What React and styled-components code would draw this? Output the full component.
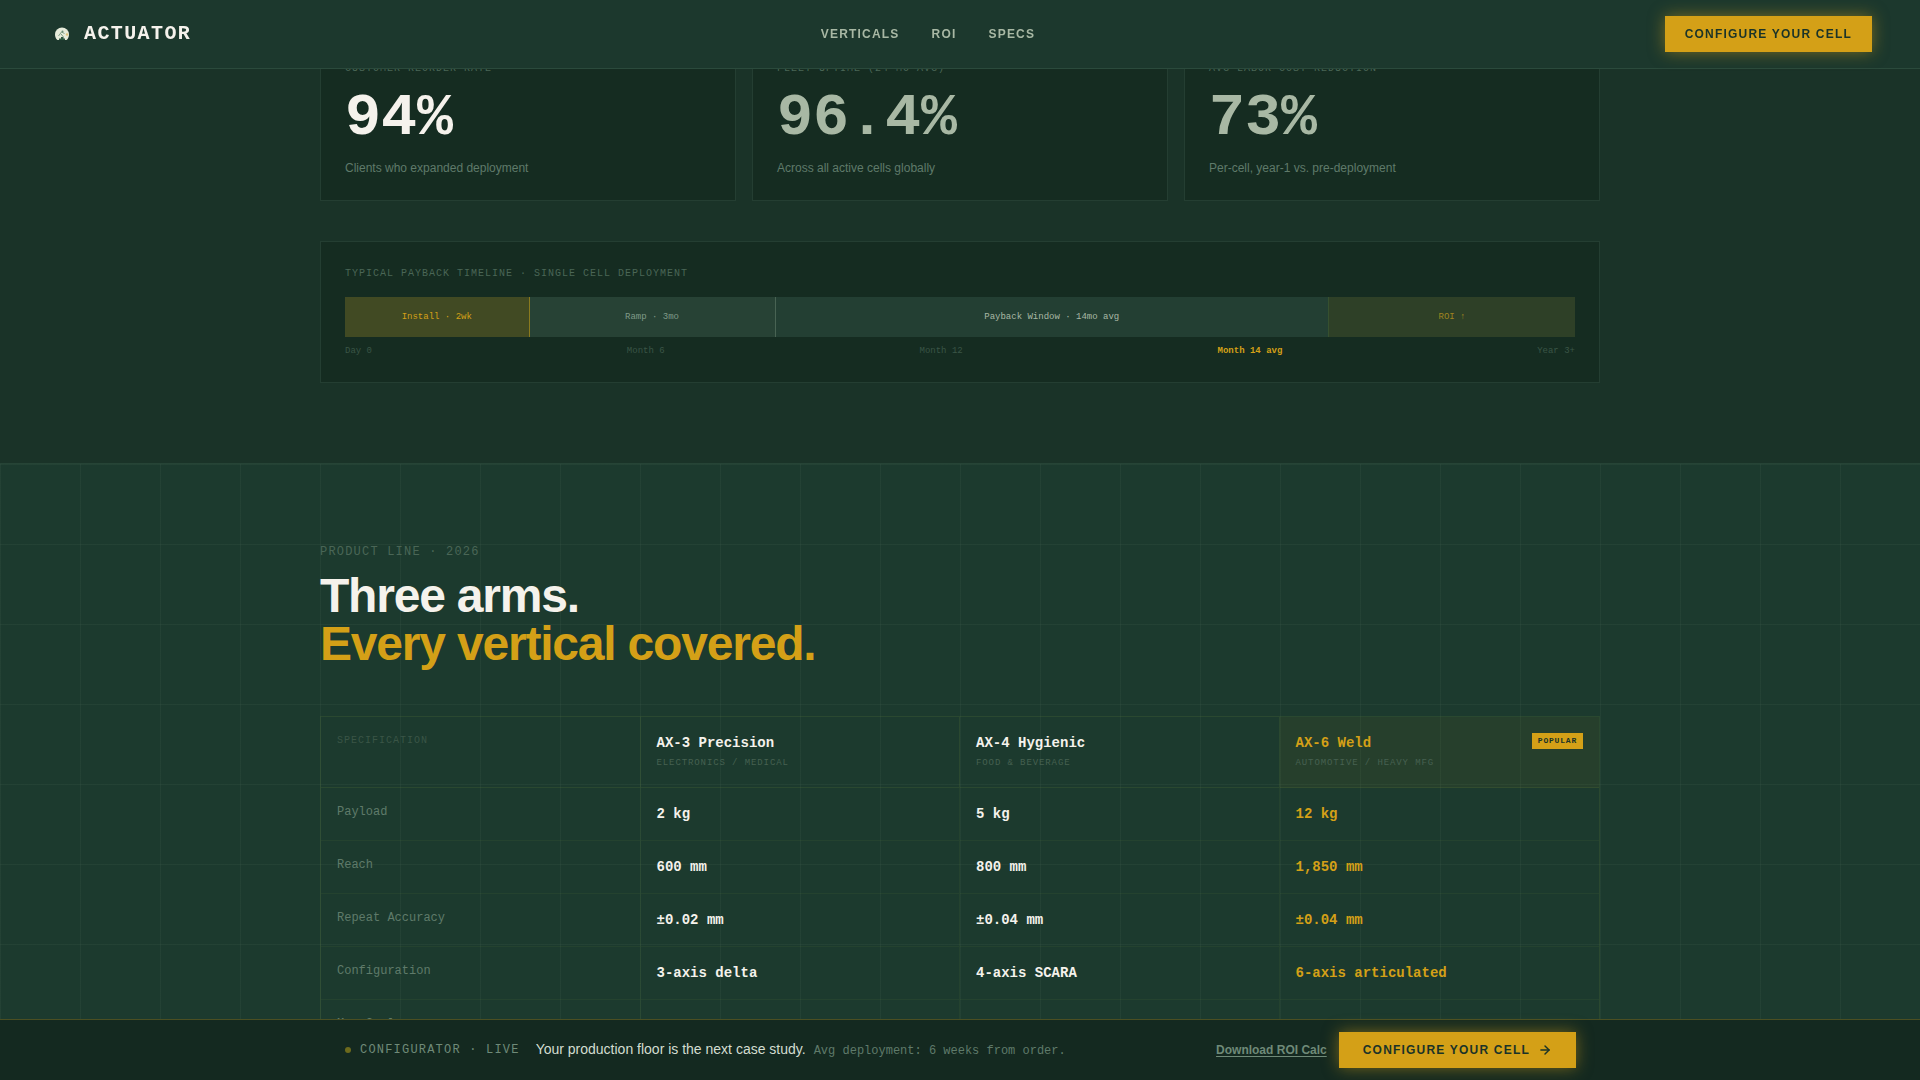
import { ArrowRight } from 'lucide-react';
import React from 'react';
import styled, { createGlobalStyle, css } from 'styled-components';

const mono = `'Liberation Mono', monospace`;
const sans = `'Liberation Sans', sans-serif`;

const stats = [
  { label: 'Customer Reorder Rate', value: '94%', note: 'Clients who expanded deployment', bright: true },
  { label: 'Fleet Uptime (24 mo avg)', value: '96.4%', note: 'Across all active cells globally' },
  { label: 'Avg Labor Cost Reduction', value: '73%', note: 'Per-cell, year-1 vs. pre-deployment' }
];

const phases = [
  { name: 'Install · 2wk', share: 15, tone: 'install' },
  { name: 'Ramp · 3mo', share: 20, tone: 'ramp' },
  { name: 'Payback Window · 14mo avg', share: 45, tone: 'payback' },
  { name: 'ROI ↑', share: 20, tone: 'roi' }
];

const ticks = ['Day 0', 'Month 6', 'Month 12', 'Month 14 avg', 'Year 3+'];

const models = [
  { name: 'AX-3 Precision', field: 'Electronics / Medical' },
  { name: 'AX-4 Hygienic', field: 'Food & Beverage' },
  { name: 'AX-6 Weld', field: 'Automotive / Heavy Mfg', popular: true }
];

const specs = [
  ['Payload', '2 kg', '5 kg', '12 kg'],
  ['Reach', '600 mm', '800 mm', '1,850 mm'],
  ['Repeat Accuracy', '±0.02 mm', '±0.04 mm', '±0.04 mm'],
  ['Configuration', '3-axis delta', '4-axis SCARA', '6-axis articulated'],
  ['Max Cycle', '180 ppm', '120 ppm', '45 ppm']
];

function App() {
  return (
    <>
      <GlobalStyle />
      <NavBar>
        <Brand href="#top">
          <LogoMark />
          ACTUATOR
        </Brand>
        <NavLinks>
          <a href="#verticals">Verticals</a>
          <a href="#roi">ROI</a>
          <a href="#specs">Specs</a>
        </NavLinks>
        <CtaButton type="button">Configure your cell</CtaButton>
      </NavBar>
      <main>
        <RoiSection id="roi">
          <Container>
            <StatGrid>
              {stats.map((stat) => (
                <StatCard key={stat.label}>
                  <SmallLabel>{stat.label}</SmallLabel>
                  <StatValue $bright={stat.bright}>{stat.value}</StatValue>
                  <StatNote>{stat.note}</StatNote>
                </StatCard>
              ))}
            </StatGrid>
            <TimelineCard>
              <SmallLabel>Typical Payback Timeline · Single Cell Deployment</SmallLabel>
              <TimelineBar>
                {phases.map((phase) => (
                  <Phase key={phase.name} $tone={phase.tone} style={{ width: `${phase.share}%` }}>
                    {phase.name}
                  </Phase>
                ))}
              </TimelineBar>
              <TickRow>
                {ticks.map((tick) => (
                  <Tick key={tick} $active={tick === 'Month 14 avg'}>
                    {tick}
                  </Tick>
                ))}
              </TickRow>
            </TimelineCard>
          </Container>
        </RoiSection>
        <SpecSection id="specs">
          <Container>
            <Eyebrow>Product Line · 2026</Eyebrow>
            <Heading>
              Three arms.
              <span>Every vertical covered.</span>
            </Heading>
            <SpecTable>
              <thead>
                <tr>
                  <SpecHead scope="col">Specification</SpecHead>
                  {models.map((model) => (
                    <ModelHead key={model.name} scope="col" $popular={model.popular}>
                      <ModelTop>
                        <div>
                          <ModelName>{model.name}</ModelName>
                          <ModelField>{model.field}</ModelField>
                        </div>
                        {model.popular && <Badge>Popular</Badge>}
                      </ModelTop>
                    </ModelHead>
                  ))}
                </tr>
              </thead>
              <tbody>
                {specs.map(([label, ...values]) => (
                  <tr key={label}>
                    <RowHead scope="row">{label}</RowHead>
                    {values.map((value, i) => (
                      <SpecCell key={models[i].name} $popular={models[i].popular}>
                        {value}
                      </SpecCell>
                    ))}
                  </tr>
                ))}
              </tbody>
            </SpecTable>
          </Container>
        </SpecSection>
      </main>
      <BottomBar>
        <BottomInner>
          <Status>
            <StatusDot />
            Configurator · Live
          </Status>
          <Pitch>
            Your production floor is the next case study.
            <span>Avg deployment: 6 weeks from order.</span>
          </Pitch>
          <Download href="#roi-calc">Download ROI Calc</Download>
          <CtaButton type="button" $wide>
            Configure your cell
            <ArrowRight size={14} strokeWidth={2.5} aria-hidden="true" />
          </CtaButton>
        </BottomInner>
      </BottomBar>
    </>
  );
}

function LogoMark() {
  return (
    <svg width="28" height="28" viewBox="0 0 28 28" aria-hidden="true">
      <path d="M9.4 20C7.800 18.600 7 16.600 7 14.400A7 7 0 0 1 21 14.400C21 16.600 20.200 18.600 18.600 20Z" fill="#e6ebda" />
      <path d="M10.500 16l3-4 3 1.500M13 14l2.500 3" fill="none" stroke="#7f9f86" strokeWidth="1" />
      <circle cx="14.500" cy="11.500" r="1" fill="#6d8f78" />
      <path d="M11 20v-1.500h2V17h2.500v1.500H17V20z" fill="#2c5740" />
      <circle cx="19" cy="14.500" r="1.200" fill="#dcc07a" />
    </svg>
  );
}

export default App;

// style
const GlobalStyle = createGlobalStyle`
  * {
    box-sizing: border-box;
  }
  body {
    margin: 0;
    background-color: #1a3328;
    color: #f5f2ec;
    font-family: ${sans};
  }
  h2,
  p {
    margin: 0;
  }
`;

const Container = styled.div`
  max-width: 1280px;
  margin: 0 auto;
`;

const NavBar = styled.header`
  position: fixed;
  top: 0;
  left: 0;
  right: 0;
  z-index: 10;
  display: flex;
  justify-content: space-between;
  align-items: center;
  padding: 16px 48px;
  border-bottom: 1px solid #2b4a3c;
  background-color: #1c382d;
`;

const Brand = styled.a`
  display: flex;
  align-items: center;
  gap: 8px;
  color: #f5f2ec;
  font-family: ${mono};
  font-size: 20px;
  font-weight: 700;
  line-height: 28px;
  letter-spacing: 0.07em;
  text-decoration: none;
`;

const NavLinks = styled.nav`
  display: flex;
  gap: 32px;

  a {
    color: #a8b8a4;
    font-size: 12px;
    font-weight: 700;
    line-height: 16px;
    letter-spacing: 0.1em;
    text-decoration: none;
    text-transform: uppercase;
  }
`;

const CtaButton = styled.button`
  display: flex;
  align-items: center;
  gap: 8px;
  padding: 10px ${(props) => (props.$wide ? 24 : 20)}px;
  border: none;
  background-color: #d4a017;
  box-shadow: 0 0 16px rgba(212, 160, 23, 0.5);
  color: #1a3328;
  font-family: ${sans};
  font-size: 12px;
  font-weight: 700;
  line-height: 16px;
  letter-spacing: 0.1em;
  text-transform: uppercase;
  cursor: pointer;
`;

const RoiSection = styled.section`
  padding: 36px 24px 80px;
`;

const cardBase = css`
  padding: 24px;
  border: 1px solid #243e32;
  background-color: #152c21;
`;

const StatGrid = styled.div`
  display: grid;
  grid-template-columns: repeat(3, 1fr);
  gap: 16px;
  margin-bottom: 40px;
`;

const StatCard = styled.article`
  ${cardBase}
`;

const SmallLabel = styled.p`
  color: #4a6656;
  font-family: ${mono};
  font-size: 10px;
  line-height: 15px;
  letter-spacing: 0.1em;
  text-transform: uppercase;
`;

const StatValue = styled.p`
  margin: 12px 0;
  color: ${(props) => (props.$bright ? '#f5f2ec' : '#a8b8a4')};
  font-family: ${mono};
  font-size: 60px;
  font-weight: 700;
  line-height: 60px;
`;

const StatNote = styled.p`
  color: #5f7a6a;
  font-size: 12px;
  line-height: 16px;
`;

const TimelineCard = styled.article`
  ${cardBase}
`;

const TimelineBar = styled.div`
  display: flex;
  height: 40px;
  margin: 16px 0 8px;
`;

const tones = {
  install: css`
    background-color: #414a23;
    border-right: 1px solid #8a7a1e;
    color: #d4a017;
  `,
  ramp: css`
    background-color: #274235;
    border-right: 1px solid #486353;
    color: #7f9a88;
  `,
  payback: css`
    background-color: #233f33;
    border-right: 1px solid #36502f;
    color: #a8b8a4;
  `,
  roi: css`
    background-color: #2e4027;
    color: #a08420;
  `
};

const Phase = styled.div`
  display: flex;
  align-items: center;
  justify-content: center;
  font-family: ${mono};
  font-size: 9px;
  line-height: 13px;
  ${(props) => tones[props.$tone]}
`;

const TickRow = styled.div`
  display: flex;
  justify-content: space-between;
`;

const Tick = styled.span`
  color: ${(props) => (props.$active ? '#d4a017' : '#3a5546')};
  font-family: ${mono};
  font-size: 9px;
  font-weight: ${(props) => (props.$active ? 700 : 400)};
  line-height: 13px;
`;

const SpecSection = styled.section`
  padding: 80px 24px;
  border-top: 1px solid #264436;
  background-color: #1c3a2e;
  background-image: linear-gradient(rgba(168, 184, 164, 0.06) 1px, transparent 1px),
    linear-gradient(90deg, rgba(168, 184, 164, 0.06) 1px, transparent 1px);
  background-size: 80px 80px;
`;

const Eyebrow = styled.p`
  color: #4a6656;
  font-family: ${mono};
  font-size: 12px;
  line-height: 16px;
  letter-spacing: 0.1em;
  text-transform: uppercase;
`;

const Heading = styled.h2`
  margin: 12px 0 48px;
  color: #f5f2ec;
  font-size: 48px;
  font-weight: 700;
  line-height: 48px;
  letter-spacing: -0.025em;

  span {
    display: block;
    color: #d4a017;
  }
`;

const SpecTable = styled.table`
  width: 100%;
  table-layout: fixed;
  border: 1px solid rgba(100, 130, 60, 0.2);
  border-spacing: 0;
  font-family: ${mono};
  text-align: left;

  th,
  td {
    padding: 16px;
    border: 0 solid rgba(100, 130, 60, 0.12);
    border-bottom-width: 1px;
    vertical-align: top;
  }

  thead th {
    border-color: rgba(100, 130, 60, 0.2);
  }

  th:not(:last-child),
  td:not(:last-child) {
    border-right-width: 1px;
  }
`;

const SpecHead = styled.th`
  color: #3a5546;
  font-size: 10px;
  font-weight: 400;
  line-height: 15px;
  letter-spacing: 0.1em;
  text-transform: uppercase;
`;

const ModelHead = styled.th`
  background-color: ${(props) => (props.$popular ? 'rgba(212, 160, 23, 0.06)' : 'transparent')};
  color: ${(props) => (props.$popular ? '#d4a017' : '#f5f2ec')};
`;

const ModelTop = styled.div`
  display: flex;
  justify-content: space-between;
  align-items: flex-start;
`;

const ModelName = styled.div`
  font-size: 14px;
  line-height: 20px;
`;

const ModelField = styled.div`
  margin-top: 2px;
  color: #466151;
  font-size: 9px;
  font-weight: 400;
  line-height: 16px;
  letter-spacing: 0.1em;
  text-transform: uppercase;
`;

const Badge = styled.span`
  padding: 2px 6px;
  background-color: #d4a017;
  color: #1a3328;
  font-size: 8px;
  line-height: 12px;
  letter-spacing: 0.1em;
  text-transform: uppercase;
`;

const RowHead = styled.th`
  color: #5f7a6a;
  font-size: 12px;
  font-weight: 400;
  line-height: 16px;
`;

const SpecCell = styled.td`
  color: ${(props) => (props.$popular ? '#d4a017' : '#f5f2ec')};
  font-size: 14px;
  font-weight: 700;
  line-height: 20px;
`;

const BottomBar = styled.aside`
  position: fixed;
  bottom: 0;
  left: 0;
  right: 0;
  z-index: 10;
  padding: 12px 24px;
  border-top: 1px solid #4b4f22;
  background-color: #142920;
`;

const BottomInner = styled(Container)`
  display: flex;
  align-items: center;
  padding: 0 24px;
`;

const Status = styled.span`
  display: flex;
  align-items: center;
  gap: 8px;
  margin-right: 16px;
  color: #6f8a78;
  font-family: ${mono};
  font-size: 12px;
  line-height: 16px;
  letter-spacing: 0.1em;
  text-transform: uppercase;
`;

const StatusDot = styled.i`
  width: 8px;
  height: 8px;
  border: 1px solid transparent;
  border-radius: 50%;
  background-color: #6d6a1c;
  background-clip: padding-box;
`;

const Pitch = styled.p`
  flex: 1;
  color: #d3ddd0;
  font-size: 14px;
  line-height: 20px;

  span {
    margin-left: 8px;
    color: #5f7a6a;
    font-family: ${mono};
    font-size: 12px;
  }
`;

const Download = styled.a`
  margin-right: 12px;
  color: #6f8a78;
  font-size: 12px;
  font-weight: 700;
  line-height: 16px;
  text-underline-offset: 2px;
`;
